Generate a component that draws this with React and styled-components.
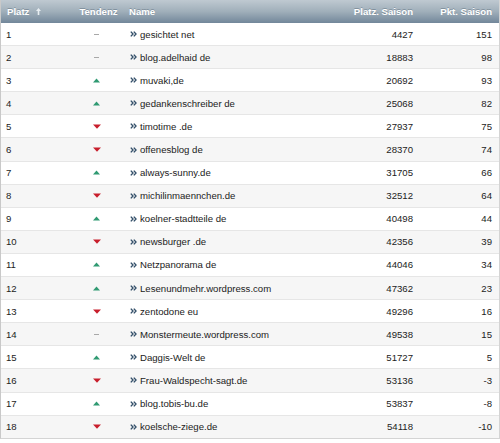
import React from "react";
import styled, { createGlobalStyle } from "styled-components";

const GlobalStyle = createGlobalStyle`
  html, body {
    margin: 0;
    padding: 0;
    background: #fff;
  }
  body {
    font-family: "Liberation Sans", Arial, sans-serif;
  }
`;

const rows = [
  [1, "same", "gesichtet net", 4427, 151],
  [2, "same", "blog.adelhaid de", 18883, 98],
  [3, "up", "muvaki,de", 20692, 93],
  [4, "up", "gedankenschreiber de", 25068, 82],
  [5, "down", "timotime .de", 27937, 75],
  [6, "down", "offenesblog de", 28370, 74],
  [7, "up", "always-sunny.de", 31705, 66],
  [8, "down", "michilinmaennchen.de", 32512, 64],
  [9, "up", "koelner-stadtteile de", 40498, 44],
  [10, "down", "newsburger .de", 42356, 39],
  [11, "up", "Netzpanorama de", 44046, 34],
  [12, "up", "Lesenundmehr.wordpress.com", 47362, 23],
  [13, "down", "zentodone eu", 49296, 16],
  [14, "same", "Monstermeute.wordpress.com", 49538, 15],
  [15, "up", "Daggis-Welt de", 51727, 5],
  [16, "down", "Frau-Waldspecht-sagt.de", 53136, -3],
  [17, "up", "blog.tobis-bu.de", 53837, -8],
  [18, "down", "koelsche-ziege.de", 54118, -10],
];

const Table = styled.div`
  width: 500px;
  box-sizing: border-box;
  border-left: 1px solid #c9c9c9;
  border-right: 1px solid #d4d4d4;
  border-bottom: 1px solid #d4d4d4;
  font-size: 9.6px;
  color: #222;
`;

const cols = "67px 55px 1fr 92px 79px";

const Head = styled.div`
  display: grid;
  grid-template-columns: ${cols};
  height: 23px;
  align-items: center;
  background: linear-gradient(#bfc9d1 0%, #a0afba 50%, #72879a 100%);
  color: #fff;
  font-weight: bold;
  text-shadow: 0 -1px 0 rgba(60, 80, 95, 0.35);
`;

const HeadCell = styled.div`
  padding: ${(p) => (p.$align === "right" ? "0 7px 0 0" : "0 0 0 6px")};
  display: flex;
  align-items: center;
  justify-content: ${(p) =>
    p.$align === "right" ? "flex-end" : p.$align === "center" ? "center" : "flex-start"};
  gap: 7px;
`;

const Row = styled.div`
  display: grid;
  grid-template-columns: ${cols};
  height: 22.1px;
  align-items: center;
  background: ${(p) => (p.$even ? "#f6f6f6" : "#fff")};
  border-top: 1px solid #e6e6e6;
  &:first-of-type {
    border-top: none;
  }
`;

const Cell = styled.div`
  padding: ${(p) => (p.$align === "right" ? "0 7px 0 0" : "0 0 0 5px")};
  text-align: ${(p) => p.$align || "left"};
  white-space: nowrap;
`;

const TrendCell = styled.div`
  display: flex;
  justify-content: center;
  align-items: center;
  padding-left: 2px;
`;

const NameCell = styled.div`
  display: flex;
  align-items: center;
  gap: 3px;
  padding-left: 7px;
  white-space: nowrap;
`;

const Dash = styled.span`
  display: block;
  width: 5px;
  height: 1px;
  background: #a8a8a8;
`;

const Body = styled.div``;

function Trend({ dir }) {
  if (dir === "same") return <Dash />;
  if (dir === "up")
    return (
      <svg width="7" height="5" viewBox="0 0 7 5">
        <polygon points="3.5,0.5 7,4.5 0,4.5" fill="#2f9a72" />
      </svg>
    );
  return (
    <svg width="8" height="5" viewBox="0 0 8 5">
      <polygon points="0,0.5 8,0.5 4,4.8" fill="#c81e2c" />
    </svg>
  );
}

function Chevrons() {
  return (
    <svg width="7" height="6" viewBox="0 0 7 6">
      <path d="M0.8 0.6 L3 3 L0.8 5.4" fill="none" stroke="#34506a" strokeWidth="1.4" />
      <path d="M3.8 0.6 L6 3 L3.8 5.4" fill="none" stroke="#34506a" strokeWidth="1.4" />
    </svg>
  );
}

function SortArrow() {
  return (
    <svg width="5" height="7" viewBox="0 0 5 7">
      <polygon points="2.5,0 5,3 3.3,3 3.3,7 1.7,7 1.7,3 0,3" fill="#e8eef2" />
    </svg>
  );
}

export default function App() {
  return (
    <>
      <GlobalStyle />
      <Table>
        <Head>
          <HeadCell>
            Platz <SortArrow />
          </HeadCell>
          <HeadCell $align="center">Tendenz</HeadCell>
          <HeadCell>Name</HeadCell>
          <HeadCell $align="right">Platz. Saison</HeadCell>
          <HeadCell $align="right">Pkt. Saison</HeadCell>
        </Head>
        <Body>
          {rows.map(([pos, dir, name, ps, pkt], i) => (
            <Row key={pos} $even={i % 2 === 1}>
              <Cell>{pos}</Cell>
              <TrendCell>
                <Trend dir={dir} />
              </TrendCell>
              <NameCell>
                <Chevrons />
                {name}
              </NameCell>
              <Cell $align="right">{ps}</Cell>
              <Cell $align="right">{pkt}</Cell>
            </Row>
          ))}
        </Body>
      </Table>
    </>
  );
}
